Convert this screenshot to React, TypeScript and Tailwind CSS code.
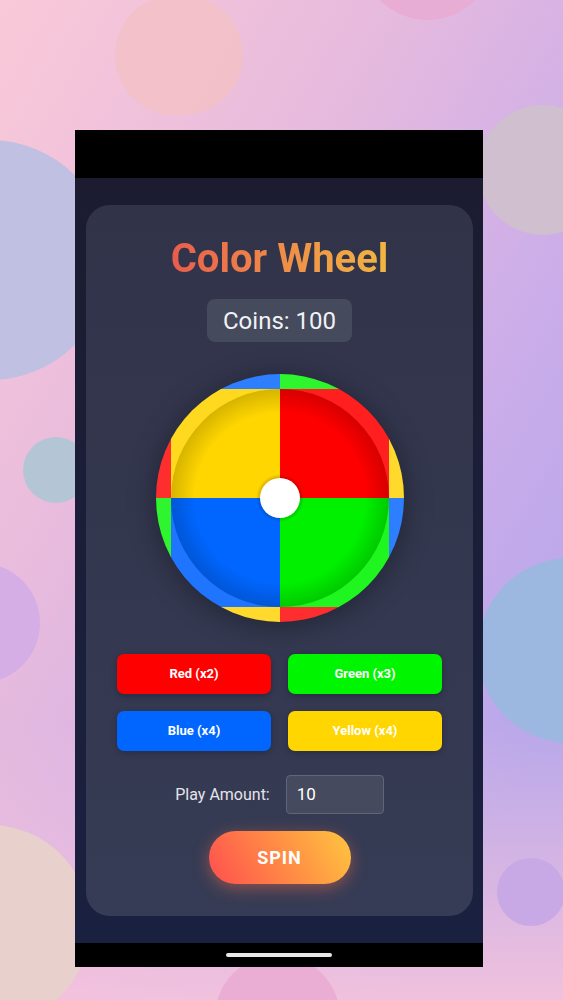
import React from "react";

const bets = [
  { label: "Red (x2)", cls: "bg-[#ff0000]" },
  { label: "Green (x3)", cls: "bg-[#00f500]" },
  { label: "Blue (x4)", cls: "bg-[#0066ff]" },
  { label: "Yellow (x4)", cls: "bg-[#ffd600]" },
];

function Wheel() {
  return (
    <svg
      width="248"
      height="248"
      viewBox="-124 -124 248 248"
      className="drop-shadow-[0_4px_14px_rgba(0,0,0,0.35)]"
    >
      <defs>
        <clipPath id="wheelClip">
          <circle r="124" />
        </clipPath>
        <radialGradient id="insetShade" cx="0" cy="0" r="109" gradientUnits="userSpaceOnUse">
          <stop offset="0.78" stopColor="#000" stopOpacity="0" />
          <stop offset="1" stopColor="#000" stopOpacity="0.16" />
        </radialGradient>
        <radialGradient id="dotShade" cx="0" cy="0" r="24" gradientUnits="userSpaceOnUse">
          <stop offset="0.75" stopColor="#000" stopOpacity="0.25" />
          <stop offset="1" stopColor="#000" stopOpacity="0" />
        </radialGradient>
      </defs>
      <g clipPath="url(#wheelClip)">
        {/* outer rim strips */}
        <rect x="-124" y="-124" width="124" height="15" fill="#2e7fff" />
        <rect x="0" y="-124" width="124" height="15" fill="#2ef52e" />
        <rect x="109" y="-124" width="15" height="124" fill="#ffd92c" />
        <rect x="109" y="0" width="15" height="124" fill="#2e7fff" />
        <rect x="-124" y="109" width="124" height="15" fill="#ffd92c" />
        <rect x="0" y="109" width="124" height="15" fill="#ff2e2e" />
        <rect x="-124" y="-124" width="15" height="124" fill="#ff2e2e" />
        <rect x="-124" y="0" width="15" height="124" fill="#2ef52e" />
        {/* inner square */}
        <rect x="-109" y="-109" width="109" height="109" fill="#ffd91f" />
        <rect x="0" y="-109" width="109" height="109" fill="#ff1f1f" />
        <rect x="-109" y="0" width="109" height="109" fill="#1f75ff" />
        <rect x="0" y="0" width="109" height="109" fill="#1ff51f" />
        {/* inner disc */}
        <path d="M0 0 L-109 0 A109 109 0 0 1 0 -109 Z" fill="#ffd600" />
        <path d="M0 0 L0 -109 A109 109 0 0 1 109 0 Z" fill="#ff0000" />
        <path d="M0 0 L109 0 A109 109 0 0 1 0 109 Z" fill="#00f000" />
        <path d="M0 0 L0 109 A109 109 0 0 1 -109 0 Z" fill="#0066ff" />
        <circle r="109" fill="url(#insetShade)" />
      </g>
      <circle r="24" fill="url(#dotShade)" />
      <circle r="20" fill="#ffffff" />
    </svg>
  );
}

export default function App() {
  return (
    <div className="relative w-full h-[1000px] overflow-hidden font-['Roboto',sans-serif] bg-[linear-gradient(180deg,rgba(0,0,0,0)_72%,rgba(246,196,220,0.9)_100%),linear-gradient(120deg,#fac9d8_0%,#e6bade_35%,#c9acea_65%,#b7a7ea_85%)]">
      {/* background bubbles */}
      <div className="absolute left-[115px] top-[-5px] w-[128px] h-[120px] rounded-full bg-[#f2c0c4]/80" />
      <div className="absolute left-[360px] top-[-115px] w-[135px] h-[135px] rounded-full bg-[#eaa8d0]/70" />
      <div className="absolute left-[-130px] top-[140px] w-[240px] h-[240px] rounded-full bg-[#bfc0e2]" />
      <div className="absolute left-[23px] top-[437px] w-[66px] h-[66px] rounded-full bg-[#b4c6d6]" />
      <div className="absolute left-[-80px] top-[563px] w-[120px] h-[120px] rounded-full bg-[#d6aee6]" />
      <div className="absolute left-[-110px] top-[825px] w-[200px] h-[200px] rounded-full bg-[#e8d0cc]" />
      <div className="absolute left-[215px] top-[955px] w-[125px] h-[125px] rounded-full bg-[#eaadd4]" />
      <div className="absolute left-[478px] top-[105px] w-[130px] h-[130px] rounded-full bg-[#cfbfcf]" />
      <div className="absolute left-[478px] top-[558px] w-[190px] h-[185px] rounded-full bg-[#9cb8e0]" />
      <div className="absolute left-[497px] top-[858px] w-[68px] h-[68px] rounded-full bg-[#c9a8e6]" />

      {/* phone */}
      <div className="relative ml-[75px] mt-[130px] w-[408px] h-[837px] flex flex-col bg-black">
        <div className="h-[48px] bg-black" />
        <div className="flex-1 bg-[linear-gradient(180deg,#1b1c30,#1a2140)] px-[11px] pt-[27px] pb-[27px] pr-[10px]">
          <div className="h-full rounded-[24px] bg-[linear-gradient(180deg,#313349,#363c55)] flex flex-col items-center pt-[32px]">
            <h1 className="h-[44px] leading-[44px] text-[40px] font-bold bg-gradient-to-r from-[#e95c4b] to-[#f1b641] bg-clip-text text-transparent">
              Color Wheel
            </h1>
            <div className="mt-[18px] h-[43px] px-4 flex items-center rounded-lg bg-[#454a5d] text-[24px] text-[#f2f2f5]">
              Coins: 100
            </div>
            <div className="mt-[32px]">
              <Wheel />
            </div>
            <div className="mt-[32px] grid grid-cols-2 gap-x-[17px] gap-y-[17px]">
              {bets.map((b) => (
                <button
                  key={b.label}
                  className={`w-[154px] h-[40px] rounded-[7px] ${b.cls} text-white text-[13px] font-bold shadow-[0_2px_6px_rgba(0,0,0,0.25)]`}
                >
                  {b.label}
                </button>
              ))}
            </div>
            <div className="mt-[24px] flex items-center gap-4">
              <span className="text-[16px] text-[#e4e4ea]">Play Amount:</span>
              <div className="w-[98px] h-[39px] rounded-[4px] border border-[#60657a] bg-[#464a5e] flex items-center px-[10px] text-[17px] text-white">
                10
              </div>
            </div>
            <button className="mt-[17px] w-[142px] h-[53px] rounded-full bg-[linear-gradient(60deg,#ff4f4f_0%,#ff8a45_50%,#ffc63f_100%)] text-white text-[18px] font-bold tracking-[1px] shadow-[0_4px_16px_rgba(255,110,70,0.45)]">
              SPIN
            </button>
          </div>
        </div>
        <div className="h-[24px] bg-black flex items-center justify-center">
          <div className="w-[106px] h-[4px] rounded-full bg-[#e8e8e8]" />
        </div>
      </div>
    </div>
  );
}
